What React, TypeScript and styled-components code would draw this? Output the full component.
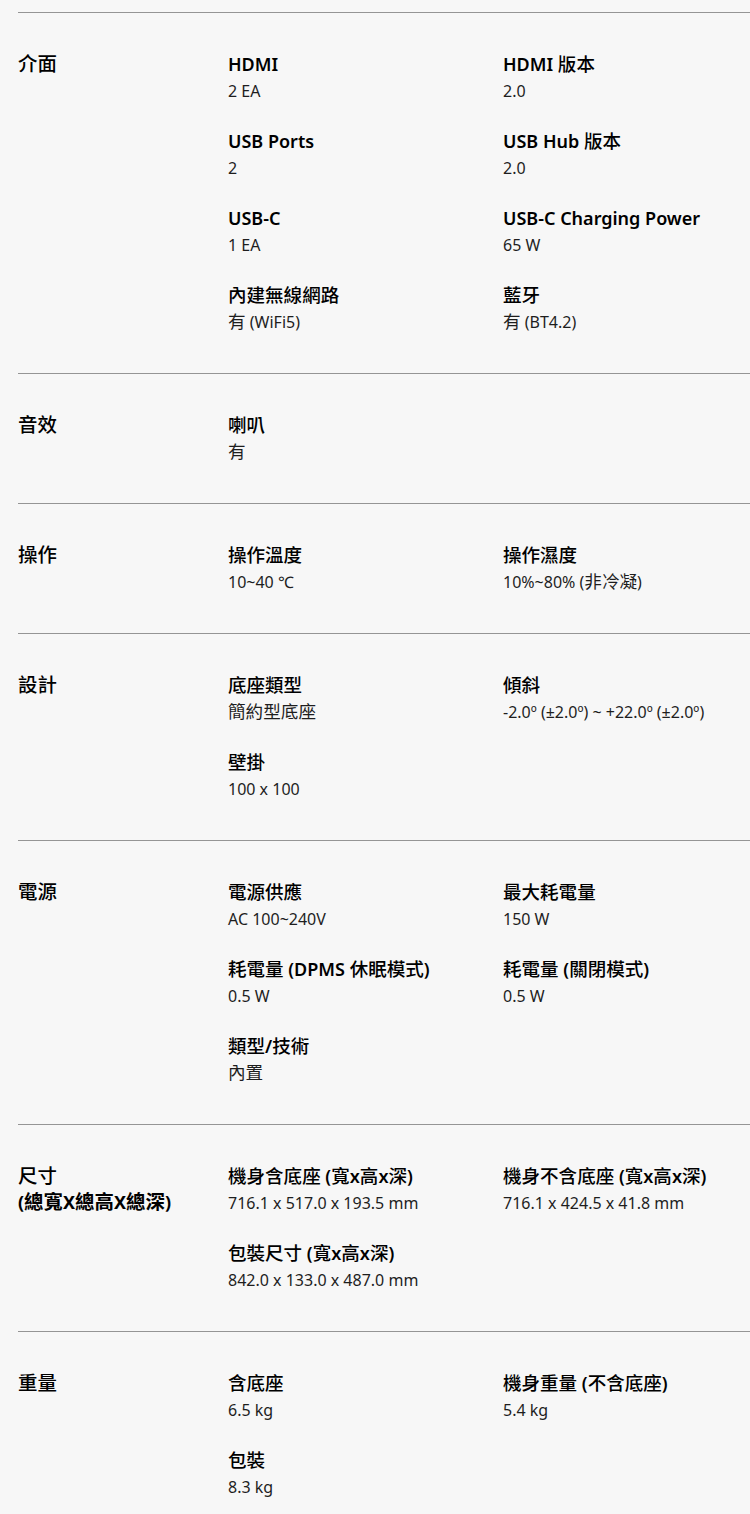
import React from 'react'
import styled, { createGlobalStyle } from 'styled-components'

const GlobalStyle = createGlobalStyle`
  html, body {
    margin: 0;
    padding: 0;
    background-color: #f7f7f7;
  }
  body {
    font-family: 'Noto Sans', 'Noto Sans CJK TC', sans-serif;
    color: #000;
  }
`

const StyledPage = styled.div`
  padding: 12px 0 0 18px;
  background-color: #f7f7f7;
`

const StyledSection = styled.section`
  display: flex;
  border-top: 1px solid #959595;
  padding: 37px 0 38px;
`

const StyledLabel = styled.div`
  width: 210px;
  flex-shrink: 0;
  margin-top: 1px;
  font-size: 18px;
  font-weight: 600;
  line-height: 26px;
`

const StyledLabelLine = styled.div<{ $strong?: boolean }>`
  font-weight: ${(p) => (p.$strong ? 700 : 600)};
`

const StyledGrid = styled.div`
  flex: 1;
  display: grid;
  grid-template-columns: 275px 1fr;
  row-gap: 23px;
`

const StyledItem = styled.div``

const StyledTitle = styled.div`
  font-size: 18px;
  font-weight: 600;
  line-height: 28px;
  white-space: nowrap;
`

const StyledValue = styled.div`
  font-size: 16px;
  font-weight: 400;
  line-height: 26px;
  color: #1e1e1e;
  white-space: nowrap;
`

const StyledCjk = styled.span<{ $scale: number; $weight?: number }>`
  font-size: ${(p) => p.$scale}em;
  font-weight: ${(p) => p.$weight ?? 'inherit'};
  line-height: 1;
`

const CJK_RUN = /([\u3000-\u30ff\u3400-\u9fff\uff00-\uffef]+)/

const MixedText: React.FC<{ text: string; scale: number; weight?: number }> = ({
  text,
  scale,
  weight,
}) => (
  <>
    {text.split(CJK_RUN).map((part, i) =>
      i % 2 === 1 ? (
        <StyledCjk key={i} $scale={scale} $weight={weight}>
          {part}
        </StyledCjk>
      ) : (
        part
      )
    )}
  </>
)

interface ISpecItem {
  title: string
  value: string
}

interface ISpecSection {
  label: string[]
  items: ISpecItem[]
}

const SECTIONS: ISpecSection[] = [
  {
    label: ['介面'],
    items: [
      { title: 'HDMI', value: '2 EA' },
      { title: 'HDMI 版本', value: '2.0' },
      { title: 'USB Ports', value: '2' },
      { title: 'USB Hub 版本', value: '2.0' },
      { title: 'USB-C', value: '1 EA' },
      { title: 'USB-C Charging Power', value: '65 W' },
      { title: '內建無線網路', value: '有 (WiFi5)' },
      { title: '藍牙', value: '有 (BT4.2)' },
    ],
  },
  {
    label: ['音效'],
    items: [{ title: '喇叭', value: '有' }],
  },
  {
    label: ['操作'],
    items: [
      { title: '操作溫度', value: '10~40 ℃' },
      { title: '操作濕度', value: '10%~80% (非冷凝)' },
    ],
  },
  {
    label: ['設計'],
    items: [
      { title: '底座類型', value: '簡約型底座' },
      { title: '傾斜', value: '-2.0º (±2.0º) ~ +22.0º (±2.0º)' },
      { title: '壁掛', value: '100 x 100' },
    ],
  },
  {
    label: ['電源'],
    items: [
      { title: '電源供應', value: 'AC 100~240V' },
      { title: '最大耗電量', value: '150 W' },
      { title: '耗電量 (DPMS 休眠模式)', value: '0.5 W' },
      { title: '耗電量 (關閉模式)', value: '0.5 W' },
      { title: '類型/技術', value: '內置' },
    ],
  },
  {
    label: ['尺寸', '(總寬X總高X總深)'],
    items: [
      { title: '機身含底座 (寬x高x深)', value: '716.1 x 517.0 x 193.5 mm' },
      { title: '機身不含底座 (寬x高x深)', value: '716.1 x 424.5 x 41.8 mm' },
      { title: '包裝尺寸 (寬x高x深)', value: '842.0 x 133.0 x 487.0 mm' },
    ],
  },
  {
    label: ['重量'],
    items: [
      { title: '含底座', value: '6.5 kg' },
      { title: '機身重量 (不含底座)', value: '5.4 kg' },
      { title: '包裝', value: '8.3 kg' },
    ],
  },
]

const SpecSection: React.FC<{ section: ISpecSection }> = ({ section }) => (
  <StyledSection>
    <StyledLabel>
      {section.label.map((line, i) => (
        <StyledLabelLine key={line} $strong={i > 0}>
          <MixedText text={line} scale={1.08} weight={i > 0 ? 700 : 500} />
        </StyledLabelLine>
      ))}
    </StyledLabel>
    <StyledGrid>
      {section.items.map((item) => (
        <StyledItem key={item.title}>
          <StyledTitle>
            <MixedText text={item.title} scale={1.03} weight={500} />
          </StyledTitle>
          <StyledValue>
            <MixedText text={item.value} scale={1.1} />
          </StyledValue>
        </StyledItem>
      ))}
    </StyledGrid>
  </StyledSection>
)

export default function App() {
  return (
    <>
      <GlobalStyle />
      <StyledPage>
        {SECTIONS.map((section) => (
          <SpecSection key={section.label[0]} section={section} />
        ))}
      </StyledPage>
    </>
  )
}
